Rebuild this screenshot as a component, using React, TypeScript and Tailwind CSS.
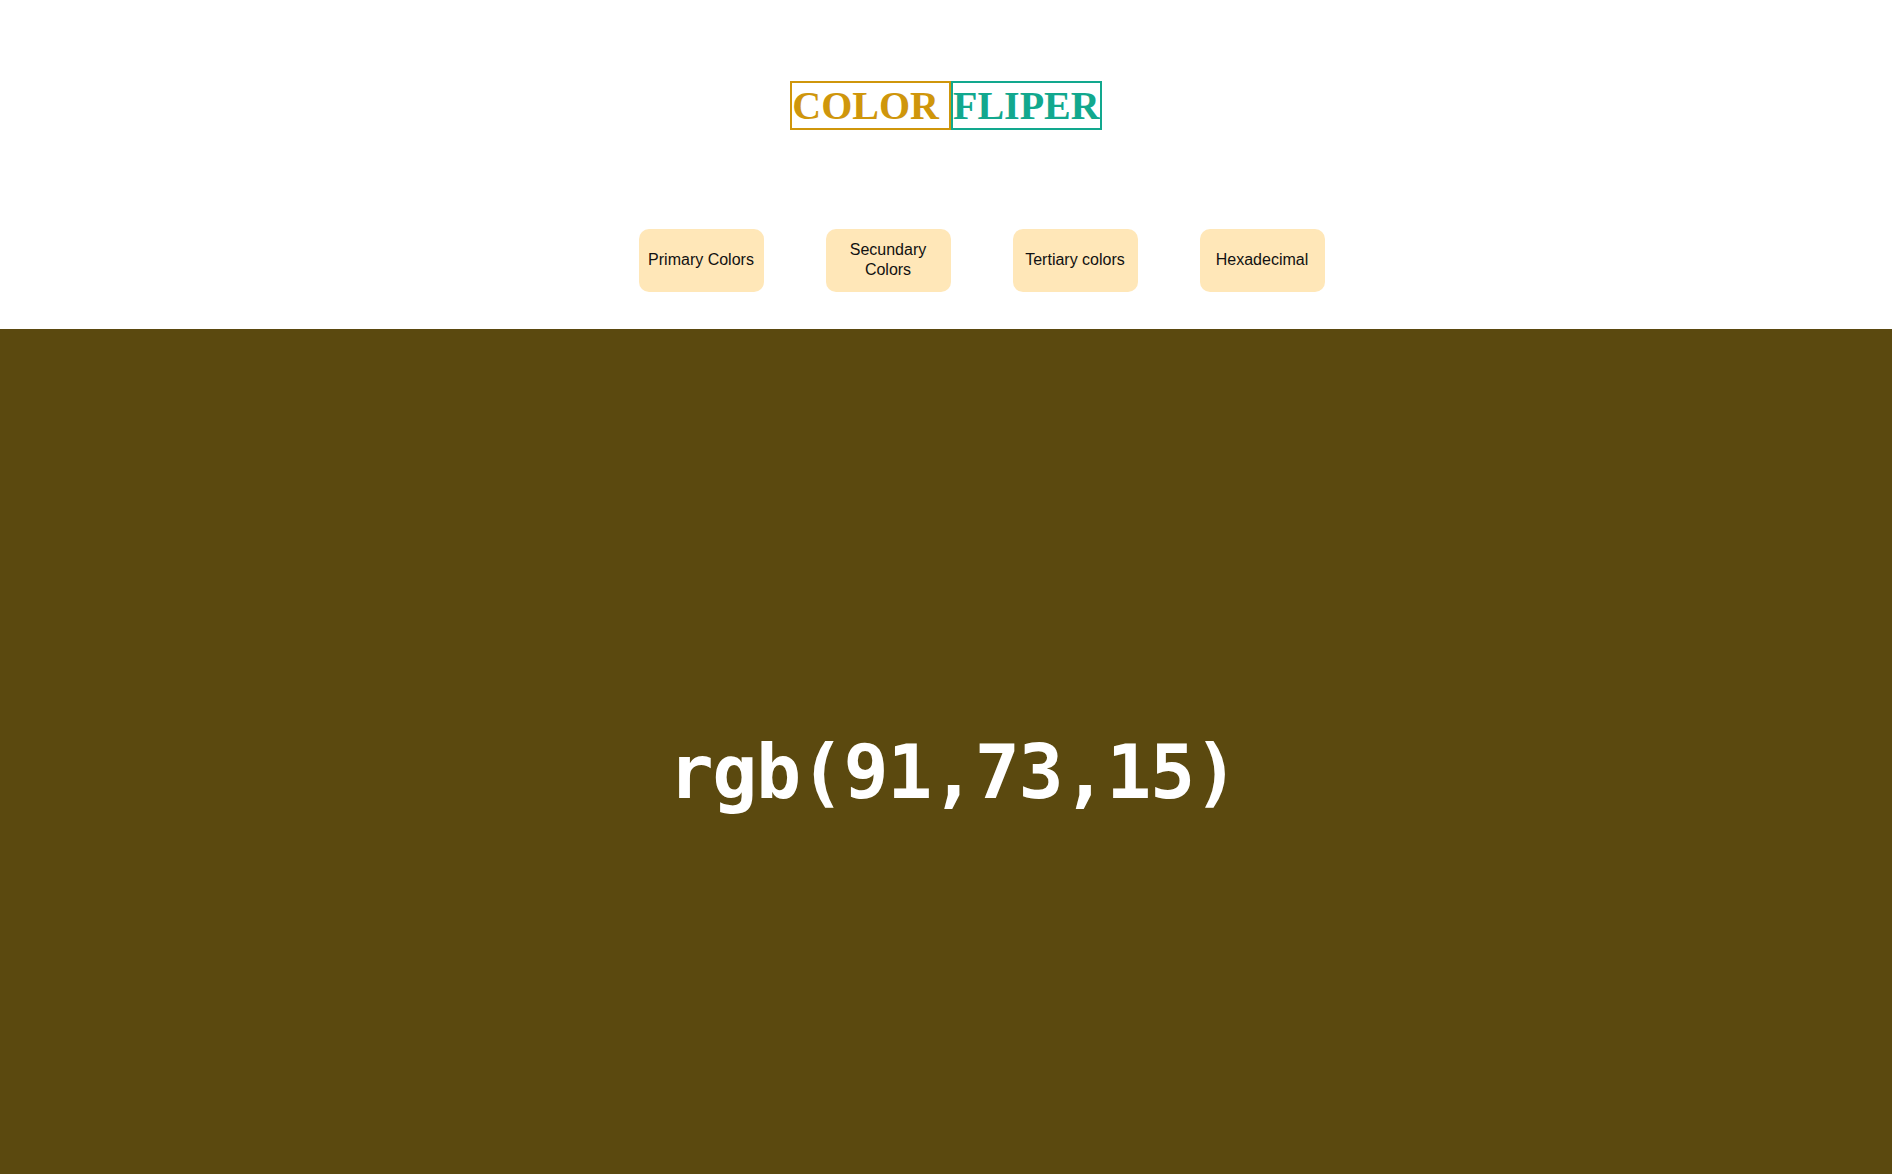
const buttons = ['Primary Colors', 'Secundary Colors', 'Tertiary colors', 'Hexadecimal'];

export default function App() {
  return (
    <div className="w-full bg-white pb-[2px]">
      <header className="flex flex-col items-center pt-[81px] pb-[37px]">
        <h1 className="flex font-bold text-[40px] leading-[45px]" style={{ fontFamily: '"Liberation Serif", "Times New Roman", serif' }}>
          <span className="border-2 border-[#cf960b] text-[#cf960b] whitespace-pre">COLOR </span>
          <span className="border-2 border-[#12a88e] text-[#12a88e]">FLIPER</span>
        </h1>
        <nav className="mt-[99px] flex gap-[62px] pl-[71px]">
          {buttons.map((b) => (
            <button
              key={b}
              className="w-[125px] h-[63px] rounded-[10px] bg-[#ffe7b8] px-2 pb-[2px] text-[16px] leading-[20px] text-[#111]"
              style={{ fontFamily: '"Liberation Sans", Arial, sans-serif' }}
            >
              {b}
            </button>
          ))}
        </nav>
      </header>
      <main className="h-[845px] bg-[#5b490f] flex items-center justify-center pt-[42px] pl-[14px]">
        <p
          className="text-white font-bold text-[75px] tracking-[-1.4px]"
          style={{ fontFamily: '"DejaVu Sans Mono", monospace' }}
        >
          rgb(91,73,15)
        </p>
      </main>
    </div>
  );
}
